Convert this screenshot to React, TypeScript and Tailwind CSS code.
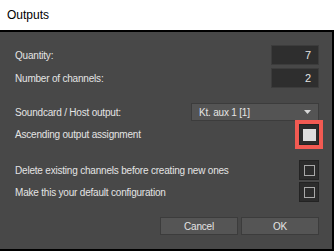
import React from "react";

const font = { fontFamily: '"Liberation Sans", Arial, sans-serif' };

function Check({ checked, highlight }: { checked?: boolean; highlight?: boolean }) {
  return (
    <div
      className={
        "flex h-full w-[20px] items-center justify-center border border-[#232323] bg-[#2c2c2c] " +
        (highlight ? "outline-4 outline-solid outline-[#f25a52]" : "")
      }
    >
      {checked ? (
        <div className="h-[12px] w-[13px] bg-[#dedede]" />
      ) : (
        <div className="h-[11px] w-[11px] border border-[#a8a8a8]" />
      )}
    </div>
  );
}

export default function App() {
  return (
    <div className="h-[251px] w-[334px] overflow-hidden" style={font}>
      <div className="flex h-[30px] items-center bg-white pl-[7px] text-[12px] text-black">Outputs</div>
      <div className="flex flex-col border-t-2 border-r-2 border-b-2 border-black bg-[#484848] pl-[15px] pr-[13px] pb-[14px] text-[10px] tracking-[-0.2px] text-[#e4e4e4]">
        <div className="mt-[13px] flex h-[20px] items-center justify-between">
          <span>Quantity:</span>
          <div className="flex h-full w-[48px] items-center justify-end border border-[#3c3c3c] bg-[#2e2e2e] pr-[7px] text-[11px]">7</div>
        </div>
        <div className="mt-[3px] flex h-[20px] items-center justify-between">
          <span>Number of channels:</span>
          <div className="flex h-full w-[48px] items-center justify-end border border-[#3c3c3c] bg-[#2e2e2e] pr-[7px] text-[11px]">2</div>
        </div>
        <div className="mt-[15px] flex h-[18px] items-center justify-between">
          <span>Soundcard / Host output:</span>
          <div className="flex h-full w-[128px] items-center justify-between border border-[#3c3c3c] bg-[#545454] pl-[7px] pr-[7px]">
            <span>Kt. aux 1 [1]</span>
            <svg width="7" height="4" viewBox="0 0 7 4">
              <path d="M0 0 H7 L3.5 4 Z" fill="#d8d8d8" />
            </svg>
          </div>
        </div>
        <div className="mt-[3px] flex h-[21px] items-center justify-between">
          <span>Ascending output assignment</span>
          <Check checked highlight />
        </div>
        <div className="mt-[15px] flex h-[20px] items-center justify-between">
          <span>Delete existing channels before creating new ones</span>
          <Check />
        </div>
        <div className="mt-[2px] flex h-[20px] items-center justify-between">
          <span>Make this your default configuration</span>
          <Check />
        </div>
        <div className="mt-[15px] flex h-[18px] justify-end gap-[3px]">
          <div className="flex h-full w-[78px] items-center justify-center border border-[#3c3c3c] bg-[#555555]">Cancel</div>
          <div className="flex h-full w-[78px] items-center justify-center border border-[#3c3c3c] bg-[#555555]">OK</div>
        </div>
      </div>
    </div>
  );
}
